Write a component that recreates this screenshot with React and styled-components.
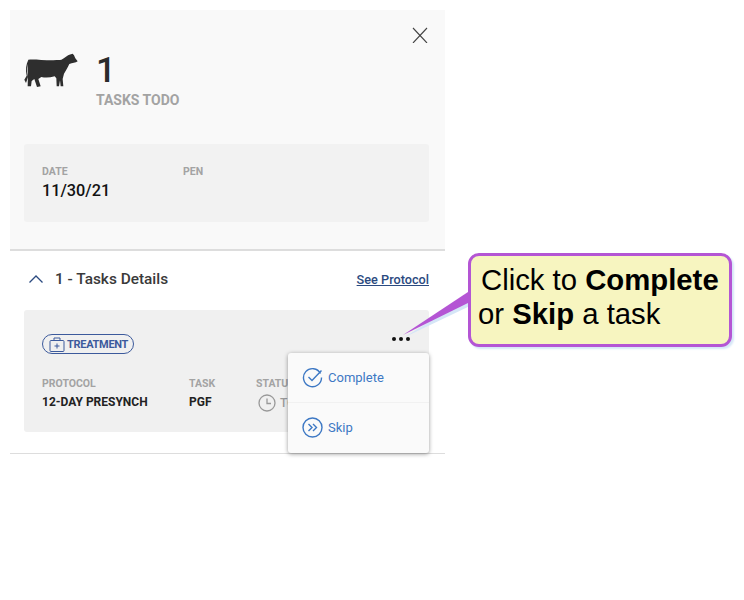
import styled, { createGlobalStyle } from 'styled-components';

const GlobalStyle = createGlobalStyle`
  html, body {
    margin: 0;
    background: #fff;
    font-family: Roboto, "Noto Sans", sans-serif;
  }
`;

const Page = styled.div`
  position: relative;
  box-sizing: border-box;
  width: 744px;
  height: 600px;
  padding: 10px 0 0 10px;
  overflow: hidden;
`;

const Drawer = styled.div`
  position: relative;
  width: 435px;
`;

const Header = styled.header`
  box-sizing: border-box;
  height: 241px;
  background: #f9f9f9;
  padding: 17px 17px 0 14px;
  border-bottom: 2px solid #ddd;
`;

const CloseButton = styled.button`
  display: block;
  margin-left: auto;
  padding: 0;
  width: 16px;
  height: 16px;
  border: none;
  background: none;
  cursor: pointer;
`;

const Summary = styled.div`
  display: flex;
  gap: 18px;
  margin: 10px -1px 0 0;
  height: 91px;
`;

const Cow = styled.svg`
  width: 54px;
  height: 34px;
`;

const Count = styled.div`
  margin-top: 2px;
  font-size: 35px;
  line-height: 32px;
  font-weight: 500;
  color: #2b2b2b;
`;

const CountLabel = styled.div`
  margin-top: 5px;
  font-size: 14px;
  line-height: 16px;
  font-weight: 700;
  color: #a3a3a3;
`;

const InfoCard = styled.div`
  display: flex;
  box-sizing: border-box;
  height: 78px;
  margin-right: -1px;
  padding: 22px 18px 0;
  background: #f2f2f2;
  border-radius: 3px;
`;

const InfoCol = styled.div`
  width: ${(p) => p.$width}px;
`;

const Label = styled.div`
  font-size: 10.5px;
  line-height: 12px;
  font-weight: 700;
  color: #a3a3a3;
`;

const DateValue = styled.div`
  margin-top: 3px;
  font-size: 16.3px;
  line-height: 20px;
  font-weight: 500;
  color: #111;
`;

const Details = styled.section`
  box-sizing: border-box;
  height: 203px;
  padding: 0 16px 0 14px;
  border-bottom: 1px solid #ddd;
`;

const DetailsHead = styled.div`
  display: flex;
  align-items: center;
  height: 56px;
  margin-bottom: 3px;
`;

const Chevron = styled.svg`
  margin-left: 3px;
`;

const Title = styled.h2`
  margin: 0 0 0 10px;
  flex: 1;
  font-size: 15.4px;
  font-weight: 500;
  color: #3a3a3a;
`;

const ProtocolLink = styled.a`
  font-size: 12.7px;
  font-weight: 500;
  color: #2b4a80;
  text-decoration: underline;
`;

const TaskCard = styled.div`
  box-sizing: border-box;
  height: 122px;
  padding: 24px 18px 0;
  background: #f0f0f0;
  border-radius: 3px;
`;

const TaskTop = styled.div`
  display: flex;
  justify-content: space-between;
  align-items: center;
`;

const Badge = styled.span`
  display: inline-flex;
  align-items: center;
  gap: 2px;
  box-sizing: border-box;
  height: 20px;
  padding: 0 5px 0 6px;
  border: 1px solid #3c5a9c;
  border-radius: 10px;
  font-size: 11px;
  font-weight: 700;
  letter-spacing: -0.3px;
  color: #3c5a9c;
`;

const Dots = styled.div`
  display: flex;
  gap: 3px;
  margin-top: -11px;
  margin-right: 1px;
`;

const Dot = styled.span`
  width: 4px;
  height: 4px;
  border-radius: 50%;
  background: #111;
`;

const TaskRow = styled.div`
  display: flex;
  margin-top: 24px;
`;

const TaskValue = styled.div`
  margin-top: 5px;
  font-size: 12px;
  line-height: 15px;
  font-weight: 700;
  color: #222;
`;

const StatusValue = styled.div`
  display: flex;
  align-items: center;
  gap: 4px;
  margin: 4px 0 0 2px;
  font-size: 12px;
  font-weight: 500;
  color: #999;
`;

const Menu = styled.div`
  position: absolute;
  left: 278px;
  top: 343px;
  width: 141px;
  height: 100px;
  background: #fafafa;
  border-radius: 3px;
  box-shadow: 0 1px 4px rgba(0, 0, 0, 0.4);
`;

const MenuItem = styled.div`
  display: flex;
  align-items: center;
  gap: 5px;
  box-sizing: border-box;
  height: ${(p) => (p.$divider ? 50 : 48)}px;
  padding-left: 14px;
  font-size: 13px;
  color: #3d78c4;
  border-bottom: ${(p) => (p.$divider ? '1px solid #f1f1f1' : 'none')};
`;

const Tail = styled.svg`
  position: absolute;
  left: 400px;
  top: 288px;
  width: 72px;
  height: 50px;
`;

const Callout = styled.div`
  position: absolute;
  left: 468px;
  top: 253px;
  box-sizing: border-box;
  width: 264px;
  height: 94px;
  padding: 7px 0 0 7px;
  background: #f7f5c0;
  border: 3px solid #b455d4;
  border-radius: 11px;
  box-shadow: 2px 2px 2px #d5e6f7;
  font-family: "Liberation Sans", Arial, sans-serif;
  font-size: 29.3px;
  line-height: 34px;
  color: #000;
`;

const CalloutLine = styled.div`
  margin-left: ${(p) => p.$indent || 0}px;
  white-space: nowrap;
`;

const App = () => (
  <Page>
    <GlobalStyle />
    <Drawer>
      <Header>
        <CloseButton aria-label="Close">
          <svg width="16" height="16" viewBox="0 0 16 16" fill="none" stroke="#444" strokeWidth="1.1">
            <path d="M1 1l14 15M15 1L1 16" />
          </svg>
        </CloseButton>
        <Summary>
          <Cow viewBox="0 0 162 102" fill="#2e2e2e">
            <path d="M13 20 C30 17 60 23 108 21 C120 19 126 8 136 5 L146 2 L150 7 L154 16 L161 25 C155 31 145 29 136 33 C132 42 126 52 120 62 L116 78 L118 100 L110 100 L108 82 L105 100 L98 100 L97 76 L92 70 C78 74 65 75 52 72 L43 78 L50 100 L39 102 L31 78 L23 84 L21 100 L11 100 L12 60 C12 45 11 30 13 20 Z" />
            <path d="M13 20 C6 34 4 50 8 68 L1 80 L6 90 L12 72 C8 52 10 36 15 24 Z" />
          </Cow>
          <div>
            <Count>1</Count>
            <CountLabel>TASKS TODO</CountLabel>
          </div>
        </Summary>
        <InfoCard>
          <InfoCol $width={141}>
            <Label>DATE</Label>
            <DateValue>11/30/21</DateValue>
          </InfoCol>
          <InfoCol $width={100}>
            <Label>PEN</Label>
          </InfoCol>
        </InfoCard>
      </Header>
      <Details>
        <DetailsHead>
          <Chevron width="18" height="18" viewBox="0 0 18 18" fill="none" stroke="#2b4a80" strokeWidth="1.3">
            <path d="M2.5 12.5L9 6l6.5 6.5" />
          </Chevron>
          <Title>1 - Tasks Details</Title>
          <ProtocolLink href="#">See Protocol</ProtocolLink>
        </DetailsHead>
        <TaskCard>
          <TaskTop>
            <Badge>
              <svg width="16" height="15" viewBox="0 0 16 15" fill="none" stroke="#3c5a9c" strokeWidth="1">
                <rect x="1" y="3.5" width="14" height="11" rx="1" />
                <path d="M5 3.5V1h6v2.5M8 6.5v5M5.5 9h5" />
              </svg>
              TREATMENT
            </Badge>
            <Dots>
              <Dot />
              <Dot />
              <Dot />
            </Dots>
          </TaskTop>
          <TaskRow>
            <InfoCol $width={147}>
              <Label>PROTOCOL</Label>
              <TaskValue>12-DAY PRESYNCH</TaskValue>
            </InfoCol>
            <InfoCol $width={67}>
              <Label>TASK</Label>
              <TaskValue>PGF</TaskValue>
            </InfoCol>
            <InfoCol $width={100}>
              <Label>STATUS</Label>
              <StatusValue>
                <svg width="18" height="18" viewBox="0 0 18 18" fill="none" stroke="#999" strokeWidth="1.3">
                  <circle cx="9" cy="9" r="8" />
                  <path d="M9 4.5V9.5H13" />
                </svg>
                TODO
              </StatusValue>
            </InfoCol>
          </TaskRow>
        </TaskCard>
      </Details>
      <Menu>
        <MenuItem $divider>
          <svg width="21" height="21" viewBox="0 0 21 21" fill="none" stroke="#3d78c4" strokeWidth="1.4">
            <path d="M18.5 6.5A9 9 0 1 0 19.5 10.5" />
            <path d="M6.5 10l3.5 3.5L19.5 3.5" />
          </svg>
          Complete
        </MenuItem>
        <MenuItem>
          <svg width="21" height="21" viewBox="0 0 21 21" fill="none" stroke="#3d78c4" strokeWidth="1.4">
            <circle cx="10.5" cy="10.5" r="9.5" />
            <path d="M6.5 7l3.5 3.5L6.5 14M11 7l3.5 3.5L11 14" />
          </svg>
          Skip
        </MenuItem>
      </Menu>
    </Drawer>
    <Tail viewBox="0 0 72 50">
      <path d="M4 47L70 5L71 15Z" fill="#d5e6f7" transform="translate(1 2)" />
      <path d="M3 47L68 4L70 14Z" fill="#b455d4" />
    </Tail>
    <Callout>
      <CalloutLine $indent={3}>
        Click to <b>Complete</b>
      </CalloutLine>
      <CalloutLine>
        or <b>Skip</b> a task
      </CalloutLine>
    </Callout>
  </Page>
);

export default App;
